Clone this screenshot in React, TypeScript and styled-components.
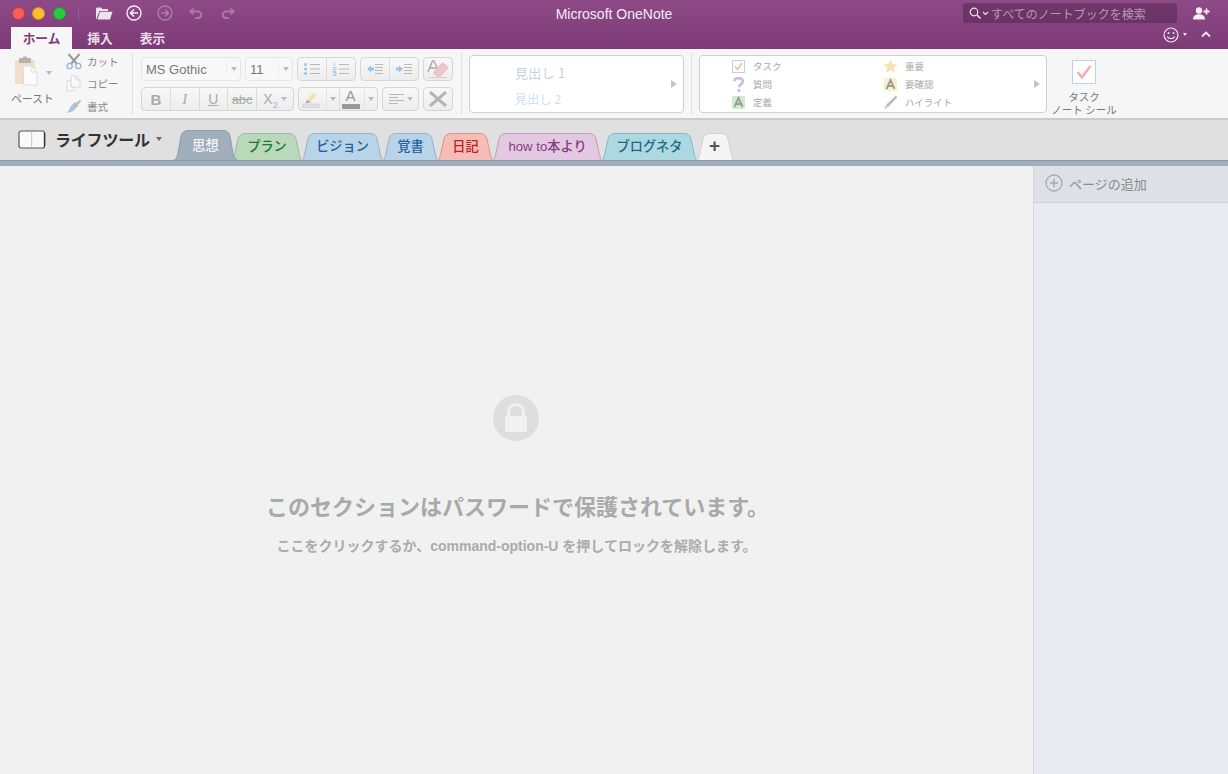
import React from "react";
import styled, { createGlobalStyle } from "styled-components";

const Global = createGlobalStyle`
  html, body { margin: 0; padding: 0; height: 100%; overflow: hidden; }
  #root { height: 100%; }
  body { font-family: "Liberation Sans", "Noto Sans CJK JP", sans-serif; }
`;

const Window = styled.div`
  width: 1228px; height: 774px; display: flex; flex-direction: column;
  background: #f1f1f1; overflow: hidden;
`;

/* ---------- title bar ---------- */
const TitleBar = styled.div`
  height: 49px; flex: none; display: flex; flex-direction: column;
  background: linear-gradient(#8e4a86, #7c3a76);
`;
const TopRow = styled.div`
  height: 24px; flex: none; display: grid; grid-template-columns: 1fr auto 1fr; align-items: center;
`;
const TopLeft = styled.div`
  display: flex; align-items: center; padding-left: 12px; height: 24px;
`;
const Light = styled.span<{ $c: string; $b: string }>`
  width: 13px; height: 13px; border-radius: 50%; margin-right: 7.4px; box-sizing: border-box;
  background: ${(p) => p.$c}; border: 1px solid ${(p) => p.$b};
`;
const VDivider = styled.span`
  width: 1px; height: 15px; background: rgba(255,255,255,0.12); margin: 0 16px 0 4.8px;
`;
const TopIcon = styled.svg<{ $gap?: number }>`
  flex: none; margin-right: ${(p) => p.$gap ?? 14}px;
`;
const AppTitle = styled.div`
  color: #f4ecf3; font-size: 14px; line-height: 24px; padding-top: 2px;
`;
const TopRight = styled.div`
  display: flex; align-items: center; justify-content: flex-end; padding-right: 18px;
`;
const Search = styled.div`
  width: 214px; height: 20px; box-sizing: border-box; border-radius: 3px; margin-right: 16px;
  background: rgba(70,30,70,0.42); display: flex; align-items: center; padding-left: 6px;
  color: #b79ab3; font-size: 12px; font-family: "Noto Sans CJK JP", sans-serif;
`;
const SearchText = styled.span` margin-left: 2px; `;
const TabRow = styled.div`
  height: 25px; display: flex; align-items: flex-end; padding-left: 11px;
`;
const MenuTab = styled.div<{ $active?: boolean; $w: number }>`
  width: ${(p) => p.$w}px; height: 22px; text-align: center;
  font: 700 12.7px/21px "Noto Sans CJK JP", sans-serif;
  color: ${(p) => (p.$active ? "#7d3c78" : "#ecdcea")};
  background: ${(p) => (p.$active ? "#f6f6f6" : "transparent")};
`;
const TabRowRight = styled.div`
  margin-left: auto; display: flex; align-items: center; height: 23px; padding-right: 17px; padding-bottom: 3px;
`;

/* ---------- ribbon ---------- */
const Ribbon = styled.div`
  height: 71px; flex: none; box-sizing: border-box; background: #f6f6f6;
  border-bottom: 2px solid #cbcbcb; display: flex; align-items: flex-start;
  font-family: "Noto Sans CJK JP", sans-serif;
`;
const Sep = styled.div<{ $ml: number; $mr: number }>`
  width: 1px; height: 62px; margin: 4px ${(p) => p.$mr}px 0 ${(p) => p.$ml}px; background: #e2e2e2; flex: none;
`;
const PasteCol = styled.div`
  width: 66px; flex: none; height: 68px; display: flex; flex-direction: column; padding-left: 11px; box-sizing: border-box;
`;
const PasteIcon = styled.div` display: flex; align-items: flex-start; height: 33px; margin: 7px 0 0 3px; `;
const PasteLabel = styled.div` font-size: 11px; line-height: 14px; color: #777; margin-top: 2px; letter-spacing: -0.2px; white-space: nowrap; `;
const ClipCol = styled.div`
  width: 66px; flex: none; display: flex; flex-direction: column; padding-top: 1px;
`;
const ClipRow = styled.div`
  height: 22.5px; display: flex; align-items: center; font-size: 10.5px; color: #888;
`;
const ClipLabel = styled.span` margin-left: 5px; `;

const FontArea = styled.div`
  width: 312px; flex: none; display: flex; flex-direction: column; gap: 6px; padding-top: 8px;
`;
const BtnRow = styled.div` display: flex; height: 24px; gap: 4px; `;
const Select = styled.div<{ $w: number }>`
  width: ${(p) => p.$w}px; box-sizing: border-box; height: 24px; flex: none;
  border: 1px solid #e6e6e6; border-radius: 4px; background: #f8f8f8; display: flex; align-items: center;
  font: 13px "Liberation Sans", sans-serif; color: #777; padding-left: 4px;
`;
const SelectText = styled.span` flex: 1; `;
const SelectCaret = styled.span`
  width: 13px; height: 14px; border-left: 1px solid #ececec; display: flex; align-items: center; justify-content: center;
`;
const Caret = styled.span<{ $c?: string; $s?: number }>`
  display: inline-block; width: 0; height: 0; flex: none;
  border-left: ${(p) => p.$s ?? 3}px solid transparent; border-right: ${(p) => p.$s ?? 3}px solid transparent;
  border-top: ${(p) => (p.$s ?? 3) + 1}px solid ${(p) => p.$c ?? "#bbb"};
`;
const Group = styled.div<{ $w: number }>`
  width: ${(p) => p.$w}px; height: 24px; flex: none; box-sizing: border-box; display: flex;
  border: 1px solid #d6d6d6; border-radius: 4px; background: linear-gradient(#f8f8f8, #ededed); overflow: hidden;
`;
const Seg = styled.div<{ $w?: number }>`
  ${(p) => (p.$w ? `width:${p.$w}px;flex:none;` : "flex:1;")}
  display: flex; align-items: center; justify-content: center; gap: 3px;
  border-left: 1px solid #dcdcdc; color: #a9a9a9; font-family: "Liberation Serif", serif;
  &:first-child { border-left: 0; }
`;
const SplitIcon = styled.div`
  flex: 1; display: flex; align-items: center; justify-content: center; height: 100%;
`;
const SplitCaret = styled.div`
  width: 12px; flex: none; height: 100%; border-left: 1px solid #e2e2e2; display: flex; align-items: center; justify-content: center;
`;
const BoldB = styled.span` font: 700 15px "Liberation Sans", sans-serif; color: #aaa; `;
const ItalicI = styled.span` font: italic 15px "Liberation Serif", serif; color: #aaa; `;
const UnderU = styled.span` font: 14px "Liberation Sans", sans-serif; color: #aaa; text-decoration: underline; `;
const Strike = styled.span` font: 13px "Liberation Sans", sans-serif; color: #aaa; text-decoration: line-through; `;
const SubX = styled.span` font: 14px "Liberation Sans", sans-serif; color: #aaa; `;
const SubTwo = styled.sub` font-size: 9px; color: #8fbce8; line-height: 0; `;
const ColorA = styled.span`
  display: flex; flex-direction: column; align-items: center; font: 15px/14px "Liberation Sans", sans-serif; color: #999;
`;
const ColorBar = styled.span` width: 18px; height: 5px; background: #999; margin-top: 1px; `;

const Box = styled.div<{ $w: number }>`
  width: ${(p) => p.$w}px; height: 58px; flex: none; box-sizing: border-box; margin-top: 6px;
  background: #fff; border: 1px solid #cfcfcf; border-radius: 4px; display: flex; align-items: center;
`;
const StyleList = styled.div`
  flex: 1; padding: 4px 0 0 45px; display: flex; flex-direction: column;
`;
const Heading1 = styled.div` font-size: 13px; line-height: 26px; color: #c6d1de; letter-spacing: .3px; `;
const Heading2 = styled.div` font-size: 12px; line-height: 26px; color: #cddff0; letter-spacing: .2px; `;
const Arrow = styled.span`
  width: 0; height: 0; flex: none; margin-right: 6px; border-top: 4.5px solid transparent; border-bottom: 4.5px solid transparent;
  border-left: 6px solid #c4c4c4;
`;
const TagGrid = styled.div`
  flex: 1; display: grid; grid-template-columns: 152px 1fr; grid-auto-rows: 18px; padding-left: 30px; align-content: center;
`;
const Tag = styled.div`
  display: flex; align-items: center; font-size: 9.5px; color: #a8a8a8; height: 18px;
`;
const TagIcon = styled.span` width: 16px; display: flex; justify-content: center; margin-right: 7px; `;
const SealCol = styled.div`
  width: 74px; flex: none; display: flex; flex-direction: column; align-items: center; padding-top: 11px;
`;
const SealText = styled.div`
  font-size: 10.5px; line-height: 13px; color: #777; text-align: center; margin-top: 6px; white-space: nowrap;
`;

/* ---------- section bar ---------- */
const SectionBar = styled.div`
  height: 40px; flex: none; background: #e0e0e0; display: flex; align-items: flex-end;
`;
const Notebook = styled.div`
  width: 173px; height: 40px; flex: none; box-sizing: border-box; padding: 0 0 2px 18px; display: flex; align-items: center;
`;
const NotebookName = styled.span`
  font: 700 16px "Noto Sans CJK JP", sans-serif; color: #333; margin: 0 6px 0 9px; white-space: nowrap; letter-spacing: -.2px;
`;
const TabWrap = styled.div<{ $w: number; $h: number; $z?: number; $ml?: number }>`
  width: ${(p) => p.$w}px; height: ${(p) => p.$h}px; flex: none; position: relative; box-sizing: border-box; padding-bottom: 2px;
  margin-left: ${(p) => p.$ml ?? 0}px;
  z-index: ${(p) => p.$z ?? 0}; display: flex; align-items: center; justify-content: center;
`;
const TabShape = styled.svg`
  position: absolute; left: 0; top: 0;
`;
const TabLabel = styled.span<{ $c: string }>`
  position: relative; color: ${(p) => p.$c}; font: 500 13.2px "Liberation Sans", "Noto Sans CJK JP", sans-serif; white-space: nowrap;
`;
const PlusLabel = styled.span`
  position: relative; color: #555; font: 700 19px/1 "Liberation Sans", sans-serif; margin-left: -2px;
`;
const Strip = styled.div`
  height: 6px; flex: none; background: #a1aebb; border-top: 1px solid #8a99a8; box-sizing: border-box;
`;

/* ---------- body ---------- */
const Body = styled.div` flex: 1; display: flex; min-height: 0; `;
const Main = styled.div`
  flex: 1; display: flex; flex-direction: column; align-items: center; padding-top: 229px; background: #f1f1f1;
`;
const LockCircle = styled.div`
  width: 46px; height: 46px; border-radius: 50%; background: #dedede; display: flex; align-items: center; justify-content: center; margin-left: -1px;
`;
const Title = styled.div`
  margin-top: 49px; font: 700 22px/30px "Noto Sans CJK JP", sans-serif; color: #a9a9a9; padding-left: 2px; white-space: nowrap;
`;
const Sub = styled.div`
  margin-top: 16px; font: 700 14px/20px "Liberation Sans", "Noto Sans CJK JP", sans-serif; color: #ababab; white-space: nowrap;
`;
const Side = styled.div`
  width: 195px; flex: none; box-sizing: border-box; border-left: 1px solid #d3d7db; background: #e8ecf0;
`;
const AddPage = styled.div`
  height: 37px; box-sizing: border-box; background: #dde1e5; border-bottom: 1px solid #ccd2d8; display: flex; align-items: center; padding: 0 0 2px 11px;
  font: 13px "Noto Sans CJK JP", sans-serif; color: #878c92;
`;
const AddCircle = styled.svg` margin-right: 6px; `;

const TABS = [
  { label: "プラン", w: 70, ml: -6, fill: "#b9d9ba", stroke: "#93c09f", color: "#1a7a30" },
  { label: "ビジョン", w: 81, ml: 0, fill: "#b9d3e9", stroke: "#92b3cd", color: "#1f5f9c" },
  { label: "覚書", w: 55, ml: 0, fill: "#b9d3e9", stroke: "#92b3cd", color: "#1f5f9c" },
  { label: "日記", w: 55, ml: 0, fill: "#f5bdb6", stroke: "#e0908a", color: "#b92222" },
  { label: "how to本より", w: 109, ml: 0, fill: "#e2c9e1", stroke: "#c19cc1", color: "#853c85" },
  { label: "ブログネタ", w: 95, ml: 0, fill: "#aed8e1", stroke: "#85b5c5", color: "#1c6b80" },
];

const shape = (w: number, h: number, foot: number) =>
  `M0.5 ${h} C${foot - 2} ${h} ${foot - 1} ${h - 3} ${foot} ${h - 7} L${foot + 3} 6 Q${foot + 4.5} 0.5 ${foot + 10} 0.5 L${w - foot - 10} 0.5 Q${w - foot - 4.5} 0.5 ${w - foot - 3} 6 L${w - foot} ${h - 7} C${w - foot + 1} ${h - 3} ${w - foot + 2} ${h} ${w - 0.5} ${h}`;

function Tab({ w, h, fill, stroke, foot = 3, z, ml, children }: { w: number; h: number; fill: string; stroke: string; foot?: number; z?: number; ml?: number; children: React.ReactNode }) {
  return (
    <TabWrap $w={w} $h={h} $z={z} $ml={ml}>
      <TabShape width={w} height={h}>
        <path d={shape(w, h, foot)} fill={fill} stroke={stroke} />
      </TabShape>
      {children}
    </TabWrap>
  );
}

export default function App() {
  return (
    <Window>
      <Global />
      <TitleBar>
        <TopRow>
          <TopLeft>
            <Light $c="#fc5b57" $b="#c9403c" />
            <Light $c="#fdbc2e" $b="#cf952a" />
            <Light $c="#28c840" $b="#23a133" />
            <VDivider />
            <TopIcon width="18" height="14" viewBox="0 0 18 14" $gap={13}>
              <path d="M1 13V2.5L2 1.5H6L7.5 3H13V5H4.5L1.5 13Z" fill="#eee3ec" />
              <path d="M2.5 13.5L5 5.8H17.5L15 13.5Z" fill="#eee3ec" />
            </TopIcon>
            <TopIcon width="16" height="16" viewBox="0 0 16 16" $gap={15}>
              <circle cx="8" cy="8" r="7" fill="none" stroke="#f4edf3" strokeWidth="1.4" />
              <path d="M8 4.5L4.5 8L8 11.5M4.8 8H12" fill="none" stroke="#f4edf3" strokeWidth="1.6" />
            </TopIcon>
            <TopIcon width="16" height="16" viewBox="0 0 16 16" $gap={15}>
              <circle cx="8" cy="8" r="7" fill="none" stroke="#ab7fa6" strokeWidth="1.3" />
              <path d="M8 4.5L11.5 8L8 11.5M11.2 8H4" fill="none" stroke="#ab7fa6" strokeWidth="1.5" />
            </TopIcon>
            <TopIcon width="16" height="12" viewBox="0 0 16 12" $gap={16}>
              <path d="M0.5 4.5L5.5 0.5V8.5Z" fill="#a877a2" />
              <path d="M4 4.5H10A3.2 3.2 0 0 1 10 11H7" fill="none" stroke="#a877a2" strokeWidth="2.2" />
            </TopIcon>
            <TopIcon width="16" height="12" viewBox="0 0 16 12">
              <path d="M15.5 4.5L10.5 0.5V8.5Z" fill="#a877a2" />
              <path d="M12 4.5H6A3.2 3.2 0 0 0 6 11H9" fill="none" stroke="#a877a2" strokeWidth="2.2" />
            </TopIcon>
          </TopLeft>
          <AppTitle>Microsoft OneNote</AppTitle>
          <TopRight>
            <Search>
              <svg width="12" height="12" viewBox="0 0 12 12">
                <circle cx="5" cy="5" r="3.8" fill="none" stroke="#f0e6ee" strokeWidth="1.2" />
                <path d="M8 8L11.5 11.5" stroke="#f0e6ee" strokeWidth="1.4" />
              </svg>
              <svg width="7" height="5" viewBox="0 0 7 5" style={{ marginLeft: 1 }}>
                <path d="M1 1L3.5 3.5L6 1" fill="none" stroke="#f0e6ee" strokeWidth="1.1" />
              </svg>
              <SearchText>すべてのノートブックを検索</SearchText>
            </Search>
            <svg width="17" height="13" viewBox="0 0 17 13">
              <circle cx="6" cy="3.5" r="3.2" fill="#f4edf3" />
              <path d="M0 12.5C0 8.5 3 7.2 6 7.2C9 7.2 12 8.5 12 12.5Z" fill="#f4edf3" />
              <path d="M13.5 1.5V7.5M10.5 4.5H16.5" stroke="#f4edf3" strokeWidth="1.8" />
            </svg>
          </TopRight>
        </TopRow>
        <TabRow>
          <MenuTab $active $w={61}>ホーム</MenuTab>
          <MenuTab $w={56}>挿入</MenuTab>
          <MenuTab $w={49}>表示</MenuTab>
          <TabRowRight>
            <svg width="16" height="16" viewBox="0 0 16 16">
              <circle cx="8" cy="8" r="7" fill="none" stroke="#f0e6ee" strokeWidth="1.2" />
              <circle cx="5.5" cy="6" r="1" fill="#f0e6ee" />
              <circle cx="10.5" cy="6" r="1" fill="#f0e6ee" />
              <path d="M4.2 9.5C5.5 12.3 10.5 12.3 11.8 9.5" fill="none" stroke="#f0e6ee" strokeWidth="1.2" />
            </svg>
            <Caret $c="#f0e6ee" $s={2.5} style={{ margin: "0 14px 0 4px" }} />
            <svg width="10" height="7" viewBox="0 0 10 7">
              <path d="M1 5.5L5 1.5L9 5.5" fill="none" stroke="#f4edf3" strokeWidth="1.8" />
            </svg>
          </TabRowRight>
        </TabRow>
      </TitleBar>

      <Ribbon>
        <PasteCol>
          <PasteIcon>
            <svg width="28" height="30" viewBox="0 0 28 30">
              <rect x="1" y="4" width="20" height="24" rx="1.5" fill="#efdfc8" />
              <rect x="5" y="2" width="12" height="5" rx="1" fill="#b5b2ad" />
              <rect x="9" y="0.5" width="4" height="3" rx="1" fill="#b5b2ad" />
              <path d="M9.5 10H17L23 16V29H9.5Z" fill="#fbfbfb" stroke="#dcdcdc" />
              <path d="M17 10V16H23" fill="none" stroke="#dcdcdc" />
            </svg>
            <Caret style={{ marginTop: 15, marginLeft: 4 }} />
          </PasteIcon>
          <PasteLabel>ペースト</PasteLabel>
        </PasteCol>
        <ClipCol>
          <ClipRow>
            <svg width="16" height="17" viewBox="0 0 16 17">
              <path d="M2.5 1L11 11M13.5 1L5 11" stroke="#9a9a9a" strokeWidth="2" />
              <circle cx="3.7" cy="13" r="2.6" fill="none" stroke="#8fb3dc" strokeWidth="1.2" />
              <circle cx="12.3" cy="13" r="2.6" fill="none" stroke="#8fb3dc" strokeWidth="1.2" />
            </svg>
            <ClipLabel>カット</ClipLabel>
          </ClipRow>
          <ClipRow>
            <svg width="16" height="17" viewBox="0 0 16 17">
              <path d="M1 5.5H5V12H8V16H1Z" fill="#fafafa" stroke="#d8d8d8" />
              <path d="M5 1H10L14 5V12H5Z" fill="#fafafa" stroke="#d8d8d8" />
              <path d="M10 1V5H14" fill="none" stroke="#d8d8d8" />
            </svg>
            <ClipLabel>コピー</ClipLabel>
          </ClipRow>
          <ClipRow>
            <svg width="16" height="15" viewBox="0 0 16 15">
              <path d="M9 3L12.5 6.5L9 10L5.5 6.5Z" fill="#bcbcbc" />
              <path d="M10 4L14 0.8L15.2 2L12 6Z" fill="#bcbcbc" />
              <path d="M5.5 6.5L9 10C7 13 3.5 14 0.5 13.5C3 12 3.5 9 5.5 6.5Z" fill="#a9c3e0" />
            </svg>
            <ClipLabel>書式</ClipLabel>
          </ClipRow>
        </ClipCol>
        <Sep $ml={0} $mr={8} />
        <FontArea>
          <BtnRow>
            <Select $w={100}>
              <SelectText>MS Gothic</SelectText>
              <SelectCaret><Caret /></SelectCaret>
            </Select>
            <Select $w={48}>
              <SelectText>11</SelectText>
              <SelectCaret><Caret /></SelectCaret>
            </Select>
            <Group $w={59}>
              <Seg>
                <svg width="18" height="14" viewBox="0 0 18 14">
                  <path d="M7 2.5H17M7 7H17M7 11.5H17" stroke="#b8b8b8" />
                  <circle cx="2.5" cy="2.5" r="1.5" fill="#9cc3ea" />
                  <circle cx="2.5" cy="7" r="1.5" fill="#9cc3ea" />
                  <circle cx="2.5" cy="11.5" r="1.5" fill="#9cc3ea" />
                </svg>
              </Seg>
              <Seg>
                <svg width="18" height="14" viewBox="0 0 18 14">
                  <path d="M7 2.5H17M7 7H17M7 11.5H17" stroke="#b8b8b8" />
                  <path d="M2.5 0.5V4M1 5.5H4V7.5H1V9.5H4M1 10.5H4V13.5H1M1 12H4" stroke="#9cc3ea" strokeWidth="0.8" fill="none" />
                </svg>
              </Seg>
            </Group>
            <Group $w={59}>
              <Seg>
                <svg width="18" height="12" viewBox="0 0 18 12">
                  <path d="M9 1.5H17M9 4.5H17M9 7.5H17M9 10.5H17" stroke="#b8b8b8" />
                  <path d="M1 6L5 2.5V4.5H8V7.5H5V9.5Z" fill="#9cc3ea" />
                </svg>
              </Seg>
              <Seg>
                <svg width="18" height="12" viewBox="0 0 18 12">
                  <path d="M9 1.5H17M9 4.5H17M9 7.5H17M9 10.5H17" stroke="#b8b8b8" />
                  <path d="M8 6L4 2.5V4.5H1V7.5H4V9.5Z" fill="#9cc3ea" />
                </svg>
              </Seg>
            </Group>
            <Group $w={30}>
              <Seg>
                <svg width="22" height="19" viewBox="0 0 22 19">
                  <path d="M1 12L5.5 1H7L11 10M3 8H9" fill="none" stroke="#a8a8a8" strokeWidth="1.4" />
                  <path d="M7 12L14 4C15 3 16 3 17 3.7L20 6C21 7 21 8 20 9L13.5 16C12.5 17 11.5 17 10.5 16L7.5 14C6.7 13.4 6.5 13 7 12Z" fill="#f1c4cc" stroke="#cfa7ae" strokeWidth=".5" />
                  <path d="M1 17.5H20" stroke="#d0d0d0" />
                </svg>
              </Seg>
            </Group>
          </BtnRow>
          <BtnRow>
            <Group $w={153}>
              <Seg><BoldB>B</BoldB></Seg>
              <Seg><ItalicI>I</ItalicI></Seg>
              <Seg><UnderU>U</UnderU></Seg>
              <Seg><Strike>abc</Strike></Seg>
              <Seg $w={36}><SubX>X<SubTwo>2</SubTwo></SubX><Caret /></Seg>
            </Group>
            <Group $w={80}>
              <Seg $w={40}>
                <SplitIcon>
                  <svg width="18" height="18" viewBox="0 0 18 18">
                    <path d="M5 10L11 2.5L14.5 5L8.5 12Z" fill="#f3e2ab" />
                    <path d="M5 10L8.5 12L6.5 13H3.5Z" fill="#a8a8a8" />
                    <rect x="0.5" y="14" width="17" height="4" fill="#e0e0e0" stroke="#cfcfcf" strokeWidth=".6" />
                  </svg>
                </SplitIcon>
                <SplitCaret><Caret /></SplitCaret>
              </Seg>
              <Seg>
                <SplitIcon>
                  <ColorA>A<ColorBar /></ColorA>
                </SplitIcon>
                <SplitCaret><Caret /></SplitCaret>
              </Seg>
            </Group>
            <Group $w={37}>
              <Seg>
                <svg width="15" height="12" viewBox="0 0 15 12">
                  <path d="M0 1.5H15M0 4.5H9M0 7.5H15M0 10.5H9" stroke="#b8b8b8" />
                </svg>
                <Caret />
              </Seg>
            </Group>
            <Group $w={30}>
              <Seg>
                <svg width="20" height="16" viewBox="0 0 20 16">
                  <path d="M2 1L18 15M18 1L2 15" stroke="#b4b4b4" strokeWidth="3" />
                </svg>
              </Seg>
            </Group>
          </BtnRow>
        </FontArea>
        <Sep $ml={8} $mr={7} />
        <Box $w={215}>
          <StyleList>
            <Heading1>見出し 1</Heading1>
            <Heading2>見出し 2</Heading2>
          </StyleList>
          <Arrow />
        </Box>
        <Sep $ml={7} $mr={7} />
        <Box $w={348}>
          <TagGrid>
            <Tag>
              <TagIcon>
                <svg width="13" height="13" viewBox="0 0 13 13">
                  <rect x=".5" y=".5" width="12" height="12" fill="#fff" stroke="#bcd0ea" />
                  <path d="M3 6.5L5.5 9.5L10 3" fill="none" stroke="#eeb3ad" strokeWidth="1.4" />
                </svg>
              </TagIcon>タスク
            </Tag>
            <Tag>
              <TagIcon>
                <svg width="15" height="15" viewBox="0 0 14 14">
                  <path d="M7 0.5L9 5H13.7L10 8L11.3 13L7 10.2L2.7 13L4 8L0.3 5H5Z" fill="#f7e3ad" />
                </svg>
              </TagIcon>重要
            </Tag>
            <Tag>
              <TagIcon>
                <svg width="11" height="15" viewBox="0 0 10 14">
                  <path d="M1 4C1 0 9 0 9 4C9 7 5.5 6.5 5.5 9.5" fill="none" stroke="#cdbfe4" strokeWidth="2.6" />
                  <circle cx="5.5" cy="12.5" r="1.5" fill="#cdbfe4" />
                </svg>
              </TagIcon>質問
            </Tag>
            <Tag>
              <TagIcon>
                <svg width="13" height="13" viewBox="0 0 13 13">
                  <rect width="13" height="13" fill="#fbf1c8" />
                  <path d="M2.5 11L6.5 2L10.5 11M4 8H9" fill="none" stroke="#9c9c9c" strokeWidth="1.9" />
                </svg>
              </TagIcon>要確認
            </Tag>
            <Tag>
              <TagIcon>
                <svg width="13" height="13" viewBox="0 0 13 13">
                  <rect width="13" height="13" fill="#cfeccd" />
                  <path d="M2.5 11L6.5 2L10.5 11M4 8H9" fill="none" stroke="#9c9c9c" strokeWidth="1.9" />
                </svg>
              </TagIcon>定義
            </Tag>
            <Tag>
              <TagIcon>
                <svg width="15" height="15" viewBox="0 0 14 14">
                  <path d="M3 9L12 0.5L13.5 2L5 11Z" fill="#bdbdbd" />
                  <path d="M3 9L5 11L1 13.5Z" fill="#eeb3c0" />
                </svg>
              </TagIcon>ハイライト
            </Tag>
          </TagGrid>
          <Arrow />
        </Box>
        <SealCol>
          <svg width="24" height="24" viewBox="0 0 24 24">
            <rect x=".5" y=".5" width="23" height="23" fill="#fff" stroke="#bcd3ec" />
            <path d="M5.5 12L10 17.5L18.5 6" fill="none" stroke="#ecb4ac" strokeWidth="2.6" />
          </svg>
          <SealText>タスク<br />ノート シール</SealText>
        </SealCol>
      </Ribbon>

      <SectionBar>
        <Notebook>
          <svg width="28" height="19" viewBox="0 0 28 19">
            <rect x="1" y="1" width="25.5" height="17" rx="2" fill="#fafafa" stroke="#555" strokeWidth="1.2" />
            <path d="M13.7 1V18" stroke="#c4c4c4" />
            <path d="M26.6 3V16" stroke="#333" strokeWidth="1.4" />
          </svg>
          <NotebookName>ライフツール</NotebookName>
          <Caret $c="#666" $s={3.5} />
        </Notebook>
        <Tab w={65} h={30} fill="#a1aebb" stroke="#8f9dab" foot={5} z={3}>
          <TabLabel $c="#f5f7f9">思想</TabLabel>
        </Tab>
        {TABS.map((t) => (
          <Tab key={t.label} w={t.w} h={27} ml={t.ml} fill={t.fill} stroke={t.stroke}>
            <TabLabel $c={t.color}>{t.label}</TabLabel>
          </Tab>
        ))}
        <Tab w={37} h={27} fill="#f5f5f5" stroke="#d2d2d2">
          <PlusLabel>+</PlusLabel>
        </Tab>
      </SectionBar>
      <Strip />

      <Body>
        <Main>
          <LockCircle>
            <svg width="24" height="30" viewBox="0 0 24 30">
              <path d="M4.5 15V9C4.5 -1 19.5 -1 19.5 9V15" fill="none" stroke="#f1f1f1" strokeWidth="3" />
              <rect x="1" y="13" width="22" height="16" rx="2" fill="#f1f1f1" />
            </svg>
          </LockCircle>
          <Title>このセクションはパスワードで保護されています。</Title>
          <Sub>ここをクリックするか、command-option-U を押してロックを解除します。</Sub>
        </Main>
        <Side>
          <AddPage>
            <AddCircle width="18" height="18" viewBox="0 0 18 18">
              <circle cx="9" cy="9" r="8" fill="none" stroke="#a0a9b2" strokeWidth="1.3" />
              <path d="M9 5V13M5 9H13" stroke="#a0a9b2" strokeWidth="1.5" />
            </AddCircle>
            ページの追加
          </AddPage>
        </Side>
      </Body>
    </Window>
  );
}
